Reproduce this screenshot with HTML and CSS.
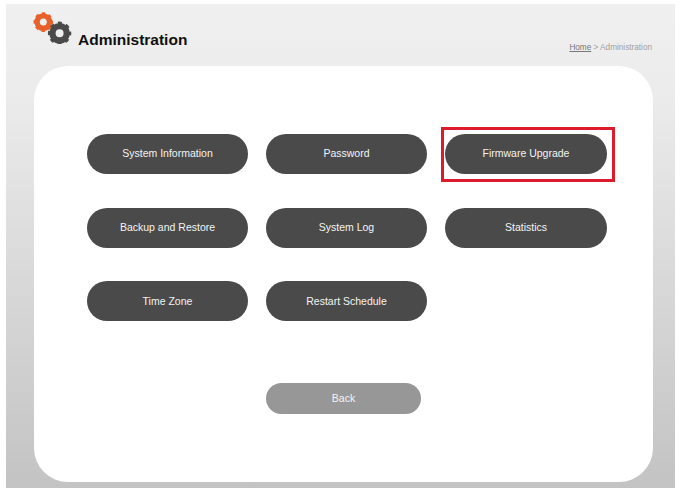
FILE: index.html
```
<!DOCTYPE html>
<html lang="en">
<head>
<meta charset="utf-8">
<title>Administration</title>
<link rel="stylesheet" href="styles.css">
</head>
<body>
<div class="panel">
  <header class="header">
    <svg class="gears" width="52" height="44" viewBox="0 0 52 44" aria-hidden="true">
      <g fill="none">
        <circle cx="14.3" cy="22.1" r="6.2" stroke="#e8602a" stroke-width="5.4"/>
        <circle cx="14.3" cy="22.1" r="8.3" stroke="#e8602a" stroke-width="3" stroke-dasharray="3.3 3.22" stroke-dashoffset="1.65"/>
        <circle cx="30.6" cy="33.3" r="7.2" stroke="#4a4a4a" stroke-width="6.4"/>
        <circle cx="30.6" cy="33.3" r="10" stroke="#4a4a4a" stroke-width="3.4" stroke-dasharray="3.9 3.95" stroke-dashoffset="1.95"/>
      </g>
    </svg>
    <h1 class="title">Administration</h1>
    <nav class="crumbs"><a class="crumb-link" href="#">Home</a> &gt; Administration</nav>
  </header>
  <main class="card">
    <div class="menu">
      <button class="btn">System Information</button>
      <button class="btn">Password</button>
      <button class="btn btn-marked">Firmware Upgrade</button>
      <button class="btn">Backup and Restore</button>
      <button class="btn">System Log</button>
      <button class="btn">Statistics</button>
      <button class="btn btn-low">Time Zone</button>
      <button class="btn btn-low">Restart Schedule</button>
      <button class="btn btn-back">Back</button>
    </div>
  </main>
</div>
</body>
</html>
```
FILE: styles.css
```
* {
  box-sizing: border-box;
}

html,
body {
  height: 100%;
}

body {
  margin: 0;
  padding: 4px 8px 8px 6px;
  background: #fff;
  font-family: "Liberation Sans", Arial, sans-serif;
}

.panel {
  height: 484px;
  padding: 0 22px 6px 28px;
  display: flex;
  flex-direction: column;
  background: linear-gradient(180deg, #f0f0f0 0%, #ebebeb 20%, #c3c3c3 100%);
}

.header {
  height: 62px;
  flex: none;
  display: flex;
  margin-left: -28px;
  margin-right: -22px;
  padding-right: 23px;
  position: relative;
}

.gears {
  flex: none;
  margin-left: 23px;
  margin-top: -4px;
}

.title {
  margin: 26px 0 0 -3px;
  font-size: 15.5px;
  line-height: 20px;
  font-weight: 700;
  color: #111;
}

.crumbs {
  margin: 38px 0 0 auto;
  font-size: 8.2px;
  line-height: 11px;
  color: #a0a0a0;
}

.crumb-link {
  color: #777;
  text-decoration: underline;
}

.card {
  flex: 1;
  padding: 68px 46px 0 53px;
  background: #fff;
  border-radius: 34px;
}

.menu {
  display: grid;
  grid-template-columns: 161px 161px 162px;
  grid-auto-rows: 40px;
  column-gap: 18px;
  row-gap: 33.5px;
}

.btn {
  border: 0;
  padding: 0 0 2px;
  border-radius: 20px;
  background: #4a4a4a;
  color: #f4f4f4;
  font: 10.5px "Liberation Sans", Arial, sans-serif;
}

.btn-low {
  padding-bottom: 0;
}

.btn-marked {
  position: relative;
}

.btn-marked::after {
  content: "";
  position: absolute;
  inset: -7px -8px -8px -4px;
  border: 3px solid #dc1c2c;
}

.btn-back {
  grid-column: 2;
  grid-row: 4;
  width: 155px;
  height: 31px;
  margin-top: 28.5px;
  border-radius: 15.5px;
  background: #979797;
}
```
